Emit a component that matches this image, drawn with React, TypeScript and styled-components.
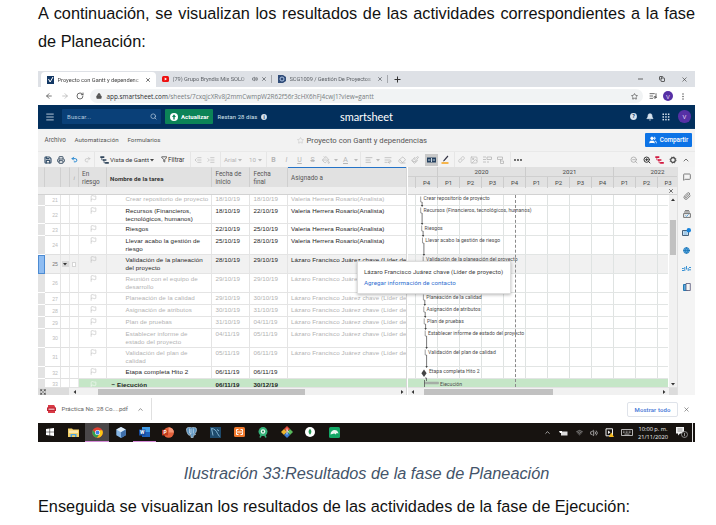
import React from "react";
import styled, { createGlobalStyle, css } from "styled-components";
import {
  ArrowLeft, ArrowRight, RotateCw, Lock, Star, Menu, Search, Bell, Save, Printer, Undo2, Redo2,
  Eraser, Paintbrush, Link, Image as ImageIcon, ZoomOut, ZoomIn, ChevronUp, Flag, Paperclip,
  Globe, Volume2, Users, X, Copy, Wifi, MessageSquare, PaintBucket, AlignLeft, WrapText,
  IndentIncrease, IndentDecrease, ListMusic, Funnel, Expand,
} from "lucide-react";

const Global = createGlobalStyle`
  *, *::before, *::after { box-sizing: border-box; }
  html, body { margin: 0; padding: 0; background: #fff; overflow: hidden; }
  svg { display: block; flex: none; }
`;

const Page = styled.main`
  width: 716px;
  height: 525px;
  padding: 0 21px 0 38px;
  overflow: hidden;
  background: #fff;
  color: #111;
  font-family: "Liberation Sans", Arial, sans-serif;
  font-size: 16.3px;
`;

const Intro = styled.p`
  margin: 0;
  width: 657px;
  height: 71px;
  line-height: 27.5px;
  white-space: nowrap;
`;

const Line = styled.span<{ $full?: boolean }>`
  display: block;
  text-align-last: ${(p) => (p.$full ? "justify" : "left")};
`;

const Caption = styled.p`
  margin: 0;
  padding-top: 20px;
  height: 54px;
  line-height: 22px;
  text-align: center;
  font-style: italic;
  color: #44546a;
`;

const Closing = styled.p`
  margin: 0;
  line-height: 20px;
  letter-spacing: 0.012px;
  white-space: nowrap;
`;

const Shot = styled.figure`
  margin: 0;
  width: 657px;
  height: 371px;
  display: flex;
  flex-direction: column;
  font-family: Roboto, "Liberation Sans", sans-serif;
  font-size: 6.2px;
  color: #444;
  white-space: nowrap;
  overflow: hidden;
`;

const Slot = styled.span<{ $w?: number; $start?: boolean; $sep?: boolean; $on?: boolean }>`
  display: flex;
  flex: none;
  align-items: center;
  justify-content: ${(p) => (p.$start ? "flex-start" : "center")};
  width: ${(p) => (p.$w ? `${p.$w}px` : "auto")};
  height: 100%;
  ${(p) => p.$sep && css`border-left: 1px solid #e6e6e6;`}
  ${(p) => p.$on && css`background: #c9c9c9; height: 12px;`}
`;

const Label = styled.span<{ $size?: number; $ls?: number; $color?: string; $weight?: number }>`
  font-size: ${(p) => p.$size ?? 6.2}px;
  letter-spacing: ${(p) => p.$ls ?? 0}px;
  color: ${(p) => p.$color ?? "inherit"};
  font-weight: ${(p) => p.$weight ?? 400};
`;

const Spacer = styled.span`
  flex: 1;
`;

/* Browser chrome */
const TabStrip = styled.div`
  display: flex;
  height: 16px;
  flex: none;
  background: #dee1e6;
  color: #5f6368;
`;

const Tab = styled.div<{ $w: number; $active?: boolean }>`
  display: flex;
  align-items: center;
  width: ${(p) => p.$w}px;
  padding: 0 5px 0 6px;
  gap: 3.5px;
  position: relative;
  ${(p) => p.$active ? css`
    margin: 1px 0 0 3px;
    background: #fff;
    border-radius: 4px 4px 0 0;
    color: #444;
  ` : css`
    &::after { content: ""; position: absolute; right: 0; top: 4px; height: 8px; border-right: 1px solid #a5a8ad; }
  `}
`;

const TabTitle = styled.span<{ $ls?: number }>`
  flex: 1;
  overflow: hidden;
  font-size: 5.7px;
  letter-spacing: ${(p) => p.$ls ?? 0}px;
  mask-image: linear-gradient(90deg, #000 90%, rgba(0, 0, 0, 0.2));
`;

const AddressRow = styled.div`
  display: flex;
  align-items: center;
  height: 18px;
  flex: none;
  background: #fff;
  color: #555;
`;

const AddressField = styled.div`
  display: flex;
  align-items: center;
  width: 553px;
  height: 14px;
  padding: 0 5px 0 5.5px;
  border-radius: 7px;
  background: #f1f3f4;
`;

const Url = styled.span`
  margin-left: 5px;
  font-family: "Open Sans", sans-serif;
  font-size: 6.4px;
  color: #777c80;
  b { font-weight: 400; color: #2d2f32; }
`;

const Avatar = styled.span<{ $d: number }>`
  display: grid;
  place-items: center;
  width: ${(p) => p.$d}px;
  height: ${(p) => p.$d}px;
  border-radius: 50%;
  background: #5630a5;
  color: #e6dcf8;
  font-size: 6px;
`;

/* Application header */
const AppBar = styled.div`
  display: flex;
  align-items: center;
  height: 24px;
  flex: none;
  background: #022f5c;
  color: #d7e3ee;
  border-bottom: 1px solid #0d3b66;
`;

const SearchBox = styled.div`
  display: flex;
  align-items: center;
  justify-content: space-between;
  width: 99px;
  height: 15px;
  margin-right: 4px;
  padding: 0 4px 0 5px;
  border-radius: 1px;
  background: #0a4078;
  color: #b4c8dc;
`;

const Upgrade = styled.div`
  display: flex;
  align-items: center;
  gap: 3px;
  width: 48px;
  height: 15px;
  padding-left: 5px;
  border-radius: 1px;
  background: #0c8457;
  color: #fff;
`;

const Brand = styled.span`
  width: 55px;
  font-family: Lato, sans-serif;
  font-size: 11px;
  letter-spacing: -0.08px;
  color: #fff;
`;

const MenuBar = styled.div`
  display: flex;
  align-items: center;
  height: 22px;
  flex: none;
  padding-left: 6.5px;
  background: #f2f2f2;
  color: #555;
`;

const Share = styled.div`
  display: flex;
  align-items: center;
  justify-content: center;
  gap: 3px;
  width: 47px;
  height: 14px;
  margin-right: 3px;
  border-radius: 1px;
  background: #0c73e6;
  color: #fff;
`;

const Toolbar = styled.div`
  display: flex;
  align-items: center;
  height: 16px;
  flex: none;
  padding-left: 4px;
  background: #f3f3f3;
  border-top: 1px solid #e9e9e9;
  color: #b5b5b5;
`;

/* Sheet */
const SheetFrame = styled.div`
  position: relative;
  flex: none;
  height: 228px;
`;

const Workspace = styled.div`
  display: flex;
  height: 228px;
`;

const GridPane = styled.section`
  width: 369px;
  height: 228px;
  overflow: hidden;
  border-right: 1px solid #d6d6d6;
`;

const gridColumns = "7px 16px 9px 8.5px 28px 105.5px 38px 37.5px 119px";

const GridHead = styled.div`
  display: grid;
  grid-template-columns: ${gridColumns};
  height: 20px;
  background: #e1e1e1;
  color: #555;
  font-size: 6.4px;
  line-height: 7.4px;
`;

const HeadCell = styled.div<{ $active?: boolean; $bold?: boolean }>`
  display: flex;
  align-items: center;
  padding-left: 3.5px;
  padding-top: 2px;
  border-right: 1px solid #cfcfcf;
  font-weight: ${(p) => (p.$bold ? 700 : 400)};
  color: ${(p) => (p.$bold ? "#333" : "inherit")};
  border-top: 1px solid ${(p) => (p.$active ? "#2473c8" : "transparent")};
`;

const SubHead = styled.div`
  display: flex;
  align-items: center;
  justify-content: flex-end;
  height: 8px;
  padding-right: 3px;
  background: #efefef;
  border-bottom: 1px solid #d2d2d2;
`;

const Row = styled.div<{ $h: number; $pad: number; $tone: string }>`
  display: grid;
  grid-template-columns: ${gridColumns};
  height: ${(p) => p.$h}px;
  overflow: hidden;
  background: ${(p) => (p.$tone === "active" ? "#f1f1f1" : "#fff")};
  font-family: "Liberation Sans", Arial, sans-serif;
  font-size: 6.2px;
  line-height: 7.4px;
  color: ${(p) => (p.$tone === "muted" ? "#b2b2b2" : "#1e1e1e")};
  --pad: ${(p) => p.$pad}px;
  --fill: ${(p) => (p.$tone === "phase" ? "#c5e6c7" : "transparent")};
  --rule: ${(p) => (p.$tone === "phase" ? "#c5e6c7" : "#e4e4e4")};
`;

const Cell = styled.div<{ $indent?: number; $ls?: number; $bold?: boolean; $oneLine?: boolean }>`
  overflow: hidden;
  padding: var(--pad) 0 0 ${(p) => p.$indent ?? 3.5}px;
  border-right: 1px solid var(--rule);
  border-bottom: 1px solid var(--rule);
  background: var(--fill);
  letter-spacing: ${(p) => p.$ls ?? 0}px;
  font-weight: ${(p) => (p.$bold ? 700 : 400)};
  white-space: ${(p) => (p.$oneLine ? "nowrap" : "pre-line")};
`;

const Grip = styled.div<{ $active: boolean }>`
  background: ${(p) => (p.$active ? "#8fbdf2" : "#e3e3e3")};
  border: 0 solid ${(p) => (p.$active ? "#4c8bd2" : "#fff")};
  border-width: ${(p) => (p.$active ? "1px" : "0 0 1px")};
`;

const RowNumber = styled.div<{ $dark: boolean }>`
  display: flex;
  align-items: center;
  justify-content: flex-end;
  padding: 2px 2px 0 0;
  border-right: 1px solid #e4e4e4;
  border-bottom: 1px solid #e0e0e0;
  font-size: 5.2px;
  color: ${(p) => (p.$dark ? "#777" : "#bdbdbd")};
`;

const Mark = styled.div`
  display: grid;
  place-items: center;
  border-right: 1px solid #e8e8e8;
  border-bottom: 1px solid #e0e0e0;
`;

const DropMark = styled.span`
  display: grid;
  place-items: center;
  width: 7px;
  height: 6px;
  background: #d9d9d9;
`;

const NoteMark = styled.span`
  width: 4px;
  height: 5px;
  border: 1px solid #d6d6d6;
  background: #fff;
`;

const GanttPane = styled.section`
  width: 269px;
  height: 228px;
  margin-left: 1px;
  overflow: hidden;
`;

const Years = styled.div`
  display: grid;
  grid-template-columns: 30px 88px 88px 88px;
  height: 10px;
  background: #e1e1e1;
  border-bottom: 1px solid #cfcfcf;
  text-align: center;
  line-height: 10px;
  span { border-right: 1px solid #cccccc; }
`;

const Quarters = styled.div`
  display: grid;
  grid-template-columns: 8px repeat(12, 22px);
  height: 10px;
  background: #e1e1e1;
  text-align: center;
  line-height: 11px;
  font-size: 6px;
  span { border-right: 1px solid #cccccc; }
  span:last-child { padding-right: 2px; border: 0; }
`;

const GanttBody = styled.div`
  display: flex;
  height: 192px;
`;

const Chart = styled.div`
  position: relative;
  width: 260px;
  height: 192px;
  overflow: hidden;
`;

const GanttRow = styled.div<{ $h: number; $pad: number; $x: number; $tone: string }>`
  height: ${(p) => p.$h}px;
  padding: ${(p) => p.$pad}px 0 0 ${(p) => p.$x}px;
  overflow: hidden;
  border-bottom: 1px solid ${(p) => (p.$tone === "phase" ? "#c5e6c7" : "#e2e5e4")};
  background-color: ${(p) => (p.$tone === "phase" ? "#c5e6c7" : p.$tone === "active" ? "#f1f1f1" : "#fff")};
  background-image: ${(p) =>
    p.$tone === "phase" ? "none" : "repeating-linear-gradient(90deg, #dfe3e2 0 1px, transparent 1px 22px)"};
  background-position: 7px 0;
  background-repeat: no-repeat;
  line-height: 7.4px;
  color: #4c4c4c;
`;

const TodayLine = styled.div`
  position: absolute;
  left: 107px;
  top: 0;
  height: 192px;
  border-left: 1px dashed #8a8a8a;
`;

const ArrowLayer = styled.svg`
  position: absolute;
  left: 0;
  top: 0;
`;

const HScroll = styled.div`
  display: flex;
  align-items: center;
  height: 8px;
  background: #f1f1f1;
  border-top: 1px solid #e2e2e2;
`;

const Thumb = styled.span<{ $w: number }>`
  width: ${(p) => p.$w}px;
  height: 6px;
  background: #c1c1c1;
`;

const CornerBox = styled.span<{ $w: number }>`
  display: flex;
  align-items: center;
  width: ${(p) => p.$w}px;
  height: 8px;
  padding-left: 2px;
  background: #dcdcdc;
  color: #444;
`;

const VScroll = styled.div`
  display: flex;
  flex-direction: column;
  align-items: center;
  width: 8px;
  margin-left: 1px;
  padding: 3px 0 1px;
  background: #f1f1f1;
`;

const VThumb = styled.span`
  width: 6px;
  height: 35px;
  margin-top: 18px;
  background: #c1c1c1;
`;

const Rail = styled.aside`
  display: flex;
  flex-direction: column;
  align-items: center;
  flex: 1;
  padding-top: 1px;
  background: #f4f4f4;
  border-left: 1px solid #e0e0e0;
  color: #6b6b6b;
`;

const RailItem = styled.span<{ $color?: string }>`
  display: grid;
  place-items: center;
  height: 18.4px;
  color: ${(p) => p.$color ?? "inherit"};
`;

const ContactCard = styled.div`
  position: absolute;
  left: 319px;
  top: 94px;
  width: 154px;
  height: 33px;
  padding: 5px 0 0 6px;
  background: #fff;
  border: 1px solid #dddddd;
  box-shadow: 0 1px 3px rgba(0, 0, 0, 0.28);
  line-height: 11px;
  color: #444;
`;

/* Download shelf and taskbar */
const Shelf = styled.div`
  display: flex;
  align-items: center;
  height: 28px;
  flex: none;
  background: #fff;
  color: #666;
`;

const FileChip = styled.div`
  display: flex;
  align-items: center;
  width: 114px;
  height: 22px;
  padding-left: 9px;
  border-right: 1px solid #e0e0e0;
`;

const ShowAll = styled.div`
  display: grid;
  place-items: center;
  width: 51px;
  height: 15px;
  border: 1px solid #dfe3ea;
  border-radius: 2px;
`;

const Taskbar = styled.div`
  display: flex;
  align-items: center;
  height: 19px;
  flex: none;
  background: #171310;
  color: #ddd;
`;

const TaskItem = styled.span<{ $on?: boolean; $open?: boolean }>`
  display: grid;
  place-items: center;
  width: 23.7px;
  height: 19px;
  background: ${(p) => (p.$on ? "#4a4748" : "transparent")};
  border-bottom: 1px solid ${(p) => (p.$on || p.$open ? "#d58bd8" : "transparent")};
`;

const Clock = styled.span`
  width: 36px;
  text-align: center;
  font-family: "Open Sans", sans-serif;
  font-size: 5.7px;
  line-height: 8px;
  color: #eee;
`;

const Caret = ({ color = "#aaa", dir = "down" }: { color?: string; dir?: "down" | "up" | "left" | "right" }) => {
  const d = { down: "M0 1h4L2 3.4z", up: "M0 3h4L2 .6z", left: "M3 0v4L.6 2z", right: "M1 0v4L3.4 2z" }[dir];
  return <svg width="4" height="4" viewBox="0 0 4 4"><path d={d} fill={color} /></svg>;
};

const GanttGlyph = ({ color }: { color: string }) => (
  <svg width="9" height="8" viewBox="0 0 9 8" fill="none" stroke={color}>
    <path d="M.3 1.2h4M3 4h3.4M5.2 6.8h3.6" strokeWidth="1.7" />
    <path d="M1.8 1.5V4H4M4 4v2.8h2" strokeWidth=".7" />
  </svg>
);

const HelpGlyph = ({ text, fill, ink, d = 8 }: { text: string; fill: string; ink: string; d?: number }) => (
  <svg width={d} height={d} viewBox="0 0 8 8">
    <circle cx="4" cy="4" r="3.9" fill={fill} />
    <text x="4" y="6.1" fontSize="6" fontWeight="700" textAnchor="middle" fill={ink}>{text}</text>
  </svg>
);

type Task = {
  n: number; h: number; tone: "muted" | "normal" | "active" | "phase"; name: string; start: string; end: string;
  who: string; gx: number; label: string; pad?: number; bold?: boolean;
};

const VAL = "Valeria Herrera Rosario(Analista)";
const LAZ = "Lázaro Francisco Juárez chave (Líder de proyecto)";

const tasks: Task[] = [
  { n: 21, h: 11, tone: "muted", name: "Crear repositorio de proyecto", start: "18/10/19", end: "18/10/19", who: VAL, gx: 15.5, label: "Crear repositorio de proyecto", pad: 0.3 },
  { n: 22, h: 18, tone: "normal", name: "Recursos (Financieros,\ntecnológicos, humanos)", start: "18/10/19", end: "22/10/19", who: VAL, gx: 15.5, label: "Recursos (Financieros, tecnológicos, humanos)" },
  { n: 23, h: 12, tone: "normal", name: "Riesgos", start: "22/10/19", end: "25/10/19", who: VAL, gx: 16.5, label: "Riesgos" },
  { n: 24, h: 19, tone: "normal", name: "Llevar acabo la gestión de\nriesgo", start: "25/10/19", end: "28/10/19", who: VAL, gx: 17.3, label: "Llevar acabo la gestión de riesgo" },
  { n: 25, h: 19, tone: "active", name: "Validación de la planeación\ndel proyecto", start: "28/10/19", end: "29/10/19", who: LAZ, gx: 18, label: "Validación de la planeación del proyecto" },
  { n: 26, h: 19, tone: "muted", name: "Reunión con el equipo de\ndesarrollo", start: "29/10/19", end: "29/10/19", who: LAZ, gx: 18, label: "" },
  { n: 27, h: 12, tone: "muted", name: "Planeación de la calidad", start: "29/10/19", end: "30/10/19", who: LAZ, gx: 18.2, label: "Planeación de la calidad" },
  { n: 28, h: 12, tone: "muted", name: "Asignación de atributos", start: "30/10/19", end: "31/10/19", who: LAZ, gx: 18.6, label: "Asignación de atributos" },
  { n: 29, h: 12, tone: "muted", name: "Plan de pruebas", start: "31/10/19", end: "04/11/19", who: LAZ, gx: 19, label: "Plan de pruebas" },
  { n: 30, h: 19, tone: "muted", name: "Establecer informe de\nestado del proyecto", start: "04/11/19", end: "05/11/19", who: LAZ, gx: 20, label: "Establecer informe de estado del proyecto" },
  { n: 31, h: 19, tone: "muted", name: "Validación del plan de\ncalidad", start: "05/11/19", end: "06/11/19", who: LAZ, gx: 20, label: "Validación del plan de calidad" },
  { n: 32, h: 12, tone: "normal", name: "Etapa completa Hito 2", start: "06/11/19", end: "06/11/19", who: "", gx: 20.9, label: "Etapa completa Hito 2" },
  { n: 33, h: 8, tone: "phase", name: "−  Ejecución", start: "06/11/19", end: "30/12/19", who: "", gx: 32, label: "Ejecución", bold: true },
];

const rowTops = tasks.map((_, i) => tasks.slice(0, i).reduce((sum, t) => sum + t.h, 0));

const quarters = ["P4", "P1", "P2", "P3", "P4", "P1", "P2", "P3", "P4", "P1", "P2", "P3"];

const Dependencies = () => (
  <ArrowLayer width="60" height="192" viewBox="0 0 60 192" fill="none" stroke="#555" strokeWidth=".8">
    {tasks.slice(0, 11).map((t, i) => {
      const x = t.gx - 2.8;
      const y = rowTops[i];
      return (
        <g key={t.n}>
          <path d={`M${x} ${y + 1.5}v5.5h1.4`} stroke="#888" />
          <path d={`M${x + 1.4} ${y + 7}V${y + t.h}`} />
          <path d={`M${x + 0.2} ${y + t.h - 1}h2.4l-1.2 2z`} fill="#444" stroke="none" />
        </g>
      );
    })}
    <path d="M16 174.500l2.600 3.800-2.600 3.800-2.600-3.800z" fill="#444" stroke="none" />
    <path d="M17 183h1.500v3" />
    <path d="M16.500 187h14v2h-14z" fill="#a9b2aa" stroke="#999" strokeWidth=".4" />
    <path d="M16.500 185v7" />
  </ArrowLayer>
);

const BrowserChrome = () => (
  <>
    <TabStrip>
      <Tab $w={115} $active>
        <svg width="7" height="8" viewBox="0 0 7 8"><path d="M0 0h7v8H0z" fill="#123764" /><path d="M1.500 3l1.600 3L6 1" stroke="#fff" fill="none" /></svg>
        <TabTitle $ls={-0.02}>Proyecto con Gantt y dependenc</TabTitle>
        <X size={6} strokeWidth={3} />
      </Tab>
      <Tab $w={116}>
        <svg width="7" height="6" viewBox="0 0 7 6"><rect width="7" height="6" rx="1.500" fill="#ee1010" /><path d="M2.700 1.600v2.800L5 3z" fill="#fff" /></svg>
        <TabTitle $ls={-0.05}>(79) Grupo Bryndis Mix SOLO</TabTitle>
        <Volume2 size={6} strokeWidth={3} />
        <X size={6} strokeWidth={3} />
      </Tab>
      <Tab $w={116}>
        <svg width="8" height="8" viewBox="0 0 8 8"><path d="M0 0h5l3 2v4L5 8H0z" fill="#314d79" /><circle cx="4" cy="4" r="2" fill="none" stroke="#aec4e4" /></svg>
        <TabTitle $ls={-0.06}>SCG1009 / Gestión De Proyectos</TabTitle>
        <X size={6} strokeWidth={3} />
      </Tab>
      <Slot $w={19}>
        <svg width="7" height="7" viewBox="0 0 7 7"><path d="M3.500.5v6M.5 3.500h6" stroke="#333" strokeWidth="1" /></svg>
      </Slot>
      <Spacer />
      <Slot $w={22}><svg width="5" height="2"><path d="M0 1h5" stroke="#444" strokeWidth=".8" /></svg></Slot>
      <Slot $w={22}><Copy size={6} strokeWidth={3} color="#333" /></Slot>
      <Slot $w={22}><X size={7} strokeWidth={2} color="#333" /></Slot>
    </TabStrip>
    <AddressRow>
      <Slot $w={21}><ArrowLeft size={8} strokeWidth={2.4} /></Slot>
      <Slot $w={11}><ArrowRight size={8} strokeWidth={2} color="#aaa" /></Slot>
      <Slot $w={20}><RotateCw size={8} strokeWidth={2.6} /></Slot>
      <AddressField>
        <Lock size={6} fill="#555" strokeWidth={2.5} />
        <Url><b>app.smartsheet.com</b>/sheets/7cxqjcXRv8j2mmCwmpW2R62f56r3cHX6hFj4cwJ1?view=gantt</Url>
        <Spacer />
        <Star size={7} strokeWidth={2.5} />
      </AddressField>
      <Slot $w={20}><ListMusic size={8} strokeWidth={2.6} /></Slot>
      <Avatar $d={10}>V</Avatar>
      <Slot $w={20}>
        <svg width="2" height="7" viewBox="0 0 2 7" fill="#444"><circle cx="1" cy="1" r=".7" /><circle cx="1" cy="3.500" r=".7" /><circle cx="1" cy="6" r=".7" /></svg>
      </Slot>
    </AddressRow>
  </>
);

const AppHeader = () => (
  <>
    <AppBar>
      <Slot $w={24}><Menu size={10} strokeWidth={2} /></Slot>
      <SearchBox><Label $size={6.1} $ls={0.1}>Buscar...</Label><Search size={7} strokeWidth={2.4} /></SearchBox>
      <Upgrade>
        <svg width="8" height="8" viewBox="0 0 8 8"><circle cx="4" cy="4" r="4" fill="#fff" /><path d="M4 1.200L6 4H4.700v2.600H3.300V4H2z" fill="#0c8457" /></svg>
        <Label $size={6} $weight={700} $ls={0.04}>Actualizar</Label>
      </Upgrade>
      <Slot $w={45.5} $start><Slot $w={4.5} /><Label $size={5.9} $ls={0.08}>Restan 28 días</Label></Slot>
      <Slot $w={11}><HelpGlyph text="i" fill="#d7e3ee" ink="#022f5c" d={6} /></Slot>
      <Slot $w={70.5} />
      <Brand>smartsheet</Brand>
      <Spacer />
      <Slot $w={16}><HelpGlyph text="?" fill="#d7e3ee" ink="#022f5c" d={7} /></Slot>
      <Slot $w={17}><Bell size={8} fill="#d7e3ee" /></Slot>
      <Slot $w={16}>
        <svg width="8" height="8" viewBox="0 0 8 8" fill="#d7e3ee">
          {[0.5, 3.2, 5.9].map((y) => [0.5, 3.2, 5.9].map((x) => <rect key={`${x}-${y}`} x={x} y={y} width="1.500" height="1.500" />))}
        </svg>
      </Slot>
      <Slot $w={21}><Avatar $d={12.5}>V</Avatar></Slot>
    </AppBar>
    <MenuBar>
      <Slot $w={30} $start><Label $size={6.3} $ls={0.03}>Archivo</Label></Slot>
      <Slot $w={53} $start><Label $size={6.2} $ls={0.06}>Automatización</Label></Slot>
      <Slot $w={169} $start><Label $size={6.2}>Formularios</Label></Slot>
      <Slot $w={10} $start><Star size={7} strokeWidth={1.6} color="#bbb" /></Slot>
      <Label $size={7.7}>Proyecto con Gantt y dependencias</Label>
      <Spacer />
      <Share><Users size={8} fill="#fff" strokeWidth={2} /><Label $size={6.3} $weight={500}>Compartir</Label></Share>
    </MenuBar>
  </>
);

const Tools = () => (
  <Toolbar>
    <Slot $w={12}><Save size={8} color="#35506b" strokeWidth={3.4} /></Slot>
    <Slot $w={14}><Printer size={8} color="#44586c" strokeWidth={3} /></Slot>
    <Slot $w={12}><Undo2 size={7} color="#2587d0" strokeWidth={3.4} /></Slot>
    <Slot $w={14}><Redo2 size={7} strokeWidth={2} /></Slot>
    <Slot $w={16} $sep><Slot $w={3} /><GanttGlyph color="#31465c" /></Slot>
    <Slot $w={50} $start><Label $size={6.2} $ls={0} $color="#333">Vista de Gantt&nbsp;</Label><Caret color="#444" /></Slot>
    <Slot $w={8}><Funnel size={6.5} color="#444" strokeWidth={3} /></Slot>
    <Slot $w={22} $start><Label $size={6.4} $color="#333">Filtrar</Label></Slot>
    <Slot $w={15} $sep><IndentDecrease size={8} strokeWidth={2} /></Slot>
    <Slot $w={12}><IndentIncrease size={8} strokeWidth={2} /></Slot>
    <Slot $w={3} />
    <Slot $w={28} $start $sep><Slot $w={3} /><Label $size={6.2}>Arial&nbsp;</Label><Caret color="#bbb" /></Slot>
    <Slot $w={18} $start><Slot $w={1} /><Label $size={6.2}>10&nbsp;</Label><Caret color="#bbb" /></Slot>
    <Slot $w={14} $sep><Label $size={7} $weight={700}>B</Label></Slot>
    <Slot $w={13}><Label $size={7}><i>I</i></Label></Slot>
    <Slot $w={13}><Label $size={7}><u>U</u></Label></Slot>
    <Slot $w={13}><Label $size={7}><s>S</s></Label></Slot>
    <Slot $w={13}><PaintBucket size={8} strokeWidth={2} /></Slot>
    <Slot $w={7}><Caret color="#bbb" /></Slot>
    <Slot $w={13}><Label $size={7.5}><u>A</u></Label></Slot>
    <Slot $w={8}><Caret color="#bbb" /></Slot>
    <Slot $w={16} $sep><AlignLeft size={8} strokeWidth={2.4} /></Slot>
    <Slot $w={4}><Caret color="#bbb" /></Slot>
    <Slot $w={16}><WrapText size={8} strokeWidth={2.2} /></Slot>
    <Slot $w={12}><Eraser size={8} strokeWidth={2.2} /></Slot>
    <Slot $w={14}><Paintbrush size={8} strokeWidth={2.2} /></Slot>
    <Slot $w={3} />
    <Slot $w={12.5} $on>
      <svg width="9" height="6" viewBox="0 0 9 6"><path d="M0 .5h9v5H0z" fill="#24405f" /><path d="M1 3h2.400M5.600 3H8M4.500 1v4" stroke="#dce6ee" strokeWidth=".9" /></svg>
    </Slot>
    <Slot $w={14}>
      <svg width="8" height="9" viewBox="0 0 8 9"><path d="M6.500.5L2.500 5.200l-.4 1.300L3.400 6 7.400 1.400z" fill="#334" /><path d="M.5 8h7" stroke="#f5a623" strokeWidth="1.600" /></svg>
    </Slot>
    <Slot $w={2} />
    <Slot $w={14} $sep><Link size={7} strokeWidth={2} /></Slot>
    <Slot $w={13}><ImageIcon size={8} strokeWidth={2} /></Slot>
    <Slot $w={13}><svg width="9" height="7" viewBox="0 0 9 7" fill="none" stroke="#b5b5b5" strokeWidth=".8"><path d="M0 1h3M0 3.500h3M0 6h3M4 1h4.500v2.500H4zM4 6h2" /></svg></Slot>
    <Slot $w={14}><svg width="7" height="8" viewBox="0 0 7 8" fill="none" stroke="#b5b5b5" strokeWidth=".8"><path d="M.5 1h5v2.500h-5zM3.500 3.500V5h3v2.500h-3z" /></svg></Slot>
    <Slot $w={2} />
    <Slot $w={16} $sep>
      <svg width="8" height="2" viewBox="0 0 8 2" fill="#333"><circle cx="1" cy="1" r=".9" /><circle cx="4" cy="1" r=".9" /><circle cx="7" cy="1" r=".9" /></svg>
    </Slot>
    <Spacer />
    <Slot $w={13}><ZoomOut size={8} strokeWidth={2} color="#999" /></Slot>
    <Slot $w={13}><ZoomIn size={8} strokeWidth={3} color="#333" /></Slot>
    <Slot $w={13}><GanttGlyph color="#d2183f" /></Slot>
    <Slot $w={13}>
      <svg width="8" height="8" viewBox="0 0 8 8" fill="none" stroke="#444"><circle cx="4" cy="4" r="2.300" strokeWidth="1.200" /><circle cx="4" cy="4" r="3.100" strokeWidth=".8" strokeDasharray="1.200 1.230" /></svg>
    </Slot>
    <Slot $w={13}><ChevronUp size={8} strokeWidth={2.2} color="#444" /></Slot>
    <Slot $w={3} />
  </Toolbar>
);

const Sheet = () => (
  <SheetFrame>
    <Workspace>
      <GridPane>
        <GridHead>
          <HeadCell /><HeadCell /><HeadCell /><HeadCell><Label $color="#aaa"><i>i</i></Label></HeadCell>
          <HeadCell>En<br />riesgo</HeadCell>
          <HeadCell $bold><Label $size={6.1} $weight={700} $ls={0.08}>Nombre de la tarea</Label></HeadCell>
          <HeadCell>Fecha de<br />inicio</HeadCell>
          <HeadCell>Fecha<br />final</HeadCell>
          <HeadCell $active><Label $size={6.3} $ls={0.06}>Asignado a</Label></HeadCell>
        </GridHead>
        <SubHead />
        {tasks.map((t) => (
          <Row key={t.n} $h={t.h} $pad={t.bold ? 2 : t.pad ?? 1.2} $tone={t.tone}>
            <Grip $active={t.tone === "active"} />
            <RowNumber $dark={t.tone === "active"}>{t.n}</RowNumber>
            <Mark>{t.tone === "active" && <DropMark><Caret color="#333" /></DropMark>}</Mark>
            <Mark>{t.tone === "active" && <NoteMark />}</Mark>
            <Cell $indent={11}><Flag size={7} strokeWidth={1.8} color={t.tone === "phase" ? "#fff" : "#b5b5b5"} /></Cell>
            <Cell $indent={t.bold ? 5 : 19} $ls={0.09} $bold={t.bold}>{t.name}</Cell>
            <Cell $bold={t.bold} $ls={0.04}>{t.start}</Cell>
            <Cell $bold={t.bold} $ls={0.04}>{t.end}</Cell>
            <Cell $oneLine $ls={0.08}>{t.who}</Cell>
          </Row>
        ))}
        <HScroll>
          <CornerBox $w={31}><Expand size={6} strokeWidth={3} /></CornerBox>
          <Slot $w={24} $start><Slot $w={4} /><Caret dir="left" color="#333" /></Slot>
          <Slot $w={5} />
          <Thumb $w={207} />
          <Spacer />
          <Slot $w={8}><Caret dir="right" color="#333" /></Slot>
        </HScroll>
      </GridPane>
      <GanttPane>
        <Years><span /><span>2020</span><span>2021</span><span>2022</span></Years>
        <Quarters>
          <span />
          {quarters.map((q, i) => <span key={i}>{q}</span>)}
        </Quarters>
        <SubHead><X size={6} strokeWidth={3} /></SubHead>
        <GanttBody>
          <Chart>
            {tasks.map((t) => (
              <GanttRow key={t.n} $h={t.h} $pad={t.bold ? 1.6 : t.pad ?? 1.2} $x={t.gx} $tone={t.tone}>
                <Label $size={5.1} $ls={0.02}>{t.label}</Label>
              </GanttRow>
            ))}
            <TodayLine />
            <Dependencies />
          </Chart>
          <VScroll>
            <Caret dir="up" color="#333" />
            <VThumb />
            <Spacer />
            <Caret dir="down" color="#333" />
          </VScroll>
        </GanttBody>
        <HScroll>
          <Slot $w={16}><Caret dir="left" color="#333" /><Slot $w={7} /></Slot>
          <Thumb $w={129} />
          <Spacer />
          <Slot $w={10}><Caret dir="right" color="#333" /></Slot>
          <CornerBox $w={8} />
        </HScroll>
      </GanttPane>
      <Rail>
        <RailItem><MessageSquare size={8} strokeWidth={2.6} /></RailItem>
        <RailItem><Paperclip size={8} strokeWidth={2.4} /></RailItem>
        <RailItem><svg width="8" height="8" viewBox="0 0 8 8" fill="none" stroke="#666"><path d="M2 .6h4M1 2h6M.6 3.600h6.800v3.800H.6z" strokeWidth=".9" /><path d="M2.500 5.400l1 1 2-2" stroke="#2587d0" strokeWidth=".8" /></svg></RailItem>
        <RailItem><svg width="9" height="8" viewBox="0 0 9 8"><path d="M.5 2.500h6v5h-6z" fill="#e9f1f8" stroke="#48627d" /><path d="M1.500 4h4M1.500 6h4" stroke="#2587d0" strokeWidth=".7" /><circle cx="6.800" cy="2.200" r="2.200" fill="#1683dc" /></svg></RailItem>
        <RailItem $color="#176fad"><Globe size={7} strokeWidth={2.4} fill="#64b2ec" /></RailItem>
        <RailItem><svg width="9" height="6" viewBox="0 0 9 6" fill="none" stroke="#2587d0" strokeWidth=".9"><path d="M0 2.500h1.800M2.800 1v4M4.500 0v3.500M6.200 2v3M7 1.500h2M0 4.500h2M7 3.800h2" /></svg></RailItem>
        <RailItem><svg width="8" height="9" viewBox="0 0 8 9"><path d="M.5 1.500h4v6h-4z" fill="#57a9df" stroke="#2678b0" /><path d="M3 .5h4.300v7H3z" fill="#f4f4f4" stroke="#557" strokeWidth=".8" /></svg></RailItem>
      </Rail>
    </Workspace>
    <ContactCard>
      <Label as="div" $size={6.2} $ls={0.02}>Lázaro Francisco Juárez chave (Líder de proyecto)</Label>
      <Label as="div" $size={6.2} $ls={0.04} $color="#2f6fd0">Agregar información de contacto</Label>
    </ContactCard>
  </SheetFrame>
);

const Downloads = () => (
  <Shelf>
    <FileChip>
      <Slot $w={14.5} $start>
        <svg width="9" height="8" viewBox="0 0 9 8"><path d="M1 0h6l1 1.300V8H1z" fill="#d93a45" /><path d="M0 2.400h9v3.600H0z" fill="#c22434" /><path d="M1.500 4.200h6" stroke="#f4c8cb" strokeWidth="1.200" /></svg>
      </Slot>
      <Label $size={6.2} $ls={-0.02}>Práctica No. 28 Co....pdf</Label>
      <Spacer />
      <Slot $w={22}><ChevronUp size={7} strokeWidth={2.4} /></Slot>
    </FileChip>
    <Spacer />
    <ShowAll><Label $size={6} $weight={500} $ls={0.1} $color="#3d74d6">Mostrar todo</Label></ShowAll>
    <Slot $w={17}><X size={7} strokeWidth={2.2} /></Slot>
  </Shelf>
);

const SystemTaskbar = () => (
  <Taskbar>
    <TaskItem><svg width="8" height="8" viewBox="0 0 8 8" fill="#fff"><path d="M0 1l3.600-.5v3.200H0zM4.100.4L8 0v3.700H4.100zM0 4.300h3.600v3.200L0 7zM4.100 4.300H8V8l-3.900-.5z" /></svg></TaskItem>
    <TaskItem><svg width="11" height="9" viewBox="0 0 11 9"><path d="M0 .5h4l1 1h6V9H0z" fill="#f3cf68" /><path d="M1 2.500h9V5H1z" fill="#fbe9ae" /><path d="M2.500 9V6h6v3H7V7.300H4V9z" fill="#4aa3df" /></svg></TaskItem>
    <TaskItem $on><svg width="11" height="11" viewBox="0 0 11 11"><circle cx="5.500" cy="5.500" r="5.300" fill="#e34133" /><path d="M.8 3.100A5.300 5.300 0 0 0 5 10.800L7.600 6.600 3.400 6.600z" fill="#31a350" /><path d="M10.300 3.300H5.500l2.300 3.400L5 10.800A5.300 5.300 0 0 0 10.300 3.300z" fill="#fbc814" /><circle cx="5.500" cy="5.500" r="2.500" fill="#fff" /><circle cx="5.500" cy="5.500" r="1.900" fill="#3f80ea" /></svg></TaskItem>
    <TaskItem><svg width="10" height="11" viewBox="0 0 10 11"><path d="M5 0l4.700 2.600v5.600L5 11 .3 8.200V2.600z" fill="#86b5e4" /><path d="M5 0l4.700 2.600L5 5.300.3 2.600z" fill="#dbeaf6" /><path d="M5 5.300l4.700-2.700v5.600L5 11z" fill="#3e6ea9" /></svg></TaskItem>
    <TaskItem $open><svg width="11" height="10" viewBox="0 0 11 10"><path d="M3 0h8v10H3z" fill="#3f9be5" /><path d="M3 5h8v5H3z" fill="#1c5fb8" /><path d="M0 2.500h6.500v6H0z" fill="#164a9c" /><text x="3.200" y="7.200" textAnchor="middle" fontSize="5" fontWeight="700" fill="#fff">W</text></svg></TaskItem>
    <TaskItem><svg width="12" height="11" viewBox="0 0 12 11"><circle cx="6.700" cy="5.500" r="5.200" fill="#e5623c" /><path d="M6.700.3a5.200 5.200 0 0 1 5.200 5.200H6.700z" fill="#f49574" /><path d="M0 2.800h6v5.600H0z" fill="#c23c1c" /><text x="3" y="7.300" textAnchor="middle" fontSize="5" fontWeight="700" fill="#fff">P</text></svg></TaskItem>
    <TaskItem><svg width="11" height="11" viewBox="0 0 11 11"><path d="M.5 2C1 0 4-.2 5.400.8 7-.3 10.400.1 10.600 2.300c.1 2-1 3.800-2 4.700l1 .5-1.600.8-.6-.4-.2 2.600H5L4.700 7.600 3 8.400C1.500 7 .3 4 .5 2z" fill="#5f94bf" stroke="#cfe0ed" strokeWidth=".6" /><path d="M3.500 1.500v4.500l1.500 1V2M7.300 1.500v5" stroke="#e5eef5" strokeWidth=".6" fill="none" /></svg></TaskItem>
    <TaskItem><svg width="11" height="11" viewBox="0 0 11 11"><path d="M0 0h11v11H0z" fill="#1e4a6b" /><path d="M1.500 1.500c3 0 5 2.500 6 5l2 3M1.500 1.500l1.500 7M7 2.500l2 1.500" stroke="#8fc0dc" strokeWidth=".9" fill="none" /></svg></TaskItem>
    <TaskItem><svg width="11" height="10" viewBox="0 0 11 10"><rect width="11" height="10" rx="1.500" fill="#f0782c" /><path d="M4.500 2.500h-2v2l1 .5-1 .5v2h2M6.500 2.500h2v2l-1 .5 1 .5v2h-2M4 5h3" fill="none" stroke="#fff" strokeWidth="1" /></svg></TaskItem>
    <TaskItem><svg width="10" height="11" viewBox="0 0 10 11"><circle cx="5" cy="4.600" r="4.500" fill="#36b37a" /><path d="M2 10.500l3-6 3 6" stroke="#36b37a" strokeWidth="1.600" fill="none" /><circle cx="5" cy="4.500" r="2.200" fill="#eefaf3" /><circle cx="5" cy="4.500" r="1" fill="#237a50" /></svg></TaskItem>
    <TaskItem><svg width="12" height="12" viewBox="0 0 12 12"><path d="M6 0l3 3-3 3-3-3z" fill="#e24c3b" /><path d="M3 3l3 3-3 3-3-3z" fill="#edb32d" /><path d="M9 3l3 3-3 3-3-3z" fill="#58b95c" /><path d="M6 6l3 3-3 3-3-3z" fill="#397bd0" /><path d="M6 2.500v6M6 4.500L8.300 6.500" stroke="#fff" strokeWidth=".8" /></svg></TaskItem>
    <TaskItem><svg width="10" height="10" viewBox="0 0 10 10"><circle cx="5" cy="5" r="5" fill="#fff" /><path d="M5 1.800c2 2.200 1.800 4 0 6-1.800-2-2-3.800 0-6z" fill="#279a54" /></svg></TaskItem>
    <TaskItem><svg width="11" height="11" viewBox="0 0 11 11"><rect width="11" height="11" rx="1.500" fill="#12a765" /><path d="M1.500 7.500c0-3 2-4.500 4-4.500s3.500 1 4 3.500l-2-.5-.5 1.500-1.800-1z" fill="#e8f8f0" /></svg></TaskItem>
    <Spacer />
    <Slot $w={15}><ChevronUp size={7} strokeWidth={2.4} /></Slot>
    <Slot $w={17}><svg width="9" height="6" viewBox="0 0 9 6"><path d="M2 1.500h6.500v4H2z" fill="#ddd" /><path d="M0 1h3v2H1z" fill="#fff" /></svg></Slot>
    <Slot $w={15}><Wifi size={7} strokeWidth={2.4} color="#aaa" /></Slot>
    <Slot $w={14}><Volume2 size={8} strokeWidth={2} /></Slot>
    <Slot $w={17}><svg width="9" height="9" viewBox="0 0 9 9"><path d="M1 .8h6.500v7H1z" fill="none" stroke="#eee" /><path d="M3 2.500l2.500 1.700L3 6z" fill="#eee" /><path d="M6.300 4.500L9 9H3.800z" fill="#f4b91e" /></svg></Slot>
    <Slot $w={17}><svg width="12" height="7" viewBox="0 0 12 7" fill="none" stroke="#ddd" strokeWidth=".8"><path d="M.5.500h11v6H.5z" /><path d="M2 2.200h8M2 3.600h8" strokeDasharray=".8 .7" strokeWidth=".7" /><path d="M3.500 5.100h5" strokeWidth=".7" /></svg></Slot>
    <Clock>10:00 p. m.<br />21/11/2020</Clock>
    <Slot $w={21}><svg width="12" height="11" viewBox="0 0 12 11"><path d="M0 0h8v6.500H4L2 8.500v-2H0z" fill="#f2f2f2" /><path d="M1.500 2h5M1.500 4h5" stroke="#555" strokeWidth=".6" /><circle cx="8.500" cy="7.500" r="3" fill="#171310" stroke="#bbb" strokeWidth=".7" /><path d="M8.500 5.800v3.400" stroke="#ccc" strokeWidth=".7" /></svg></Slot>
    <Slot $w={3} $sep />
  </Taskbar>
);

export default function App() {
  return (
    <>
      <Global />
      <Page>
        <Intro>
          <Line $full>A continuación, se visualizan los resultados de las actividades correspondientes a la fase</Line>
          <Line>de Planeación:</Line>
        </Intro>
        <Shot>
          <BrowserChrome />
          <AppHeader />
          <Tools />
          <Sheet />
          <Downloads />
          <SystemTaskbar />
        </Shot>
        <Caption>Ilustración 33:Resultados de la fase de Planeación</Caption>
        <Closing>Enseguida se visualizan los resultados de las actividades de la fase de Ejecución:</Closing>
      </Page>
    </>
  );
}
